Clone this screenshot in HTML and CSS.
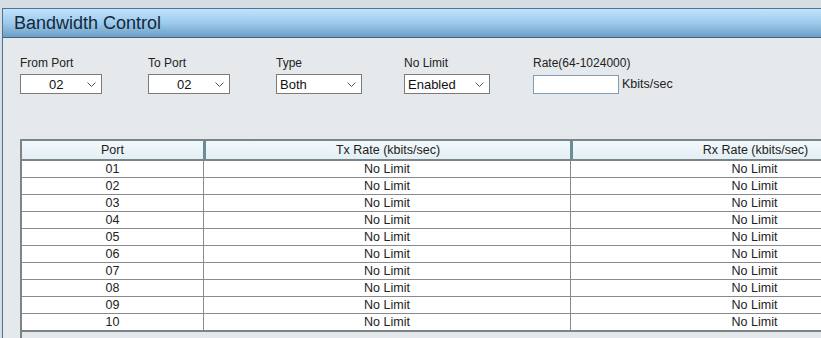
FILE: index.html
```html
<!DOCTYPE html>
<html lang="en">
<head>
  <meta charset="UTF-8">
  <title>Bandwidth Control</title>
  <link rel="stylesheet" href="styles.css">
</head>
<body>

  <div class="panel">
    <div class="panel-header">Bandwidth Control</div>

    <div class="panel-body">
      <!-- form row -->
      <div class="form-row">
        <div class="field">
          <label>From Port</label>
          <div class="select select-port">
            <span>02</span>
            <svg class="chev" width="9" height="5" viewBox="0 0 9 5"><polyline points="0.5,0.5 4.5,4.5 8.5,0.5" fill="none" stroke="#555" stroke-width="1"/></svg>
          </div>
        </div>
        <div class="field">
          <label>To Port</label>
          <div class="select select-port">
            <span>02</span>
            <svg class="chev" width="9" height="5" viewBox="0 0 9 5"><polyline points="0.5,0.5 4.5,4.5 8.5,0.5" fill="none" stroke="#555" stroke-width="1"/></svg>
          </div>
        </div>
        <div class="field">
          <label>Type</label>
          <div class="select select-wide">
            <span>Both</span>
            <svg class="chev" width="9" height="5" viewBox="0 0 9 5"><polyline points="0.5,0.5 4.5,4.5 8.5,0.5" fill="none" stroke="#555" stroke-width="1"/></svg>
          </div>
        </div>
        <div class="field field-last">
          <label>No Limit</label>
          <div class="select select-wide">
            <span>Enabled</span>
            <svg class="chev" width="9" height="5" viewBox="0 0 9 5"><polyline points="0.5,0.5 4.5,4.5 8.5,0.5" fill="none" stroke="#555" stroke-width="1"/></svg>
          </div>
        </div>
        <div class="field">
          <label>Rate(64-1024000)</label>
          <div class="rate">
            <input type="text" class="rate-input">
            <span>Kbits/sec</span>
          </div>
        </div>
      </div>

      <!-- port table -->
      <div class="table-wrap">
        <table class="port-table">
          <thead>
            <tr>
              <th class="col-port">Port</th>
              <th class="col-tx">Tx Rate (kbits/sec)</th>
              <th class="col-rx">Rx Rate (kbits/sec)</th>
            </tr>
          </thead>
          <tbody>
            <tr><td>01</td><td>No Limit</td><td>No Limit</td></tr>
            <tr><td>02</td><td>No Limit</td><td>No Limit</td></tr>
            <tr><td>03</td><td>No Limit</td><td>No Limit</td></tr>
            <tr><td>04</td><td>No Limit</td><td>No Limit</td></tr>
            <tr><td>05</td><td>No Limit</td><td>No Limit</td></tr>
            <tr><td>06</td><td>No Limit</td><td>No Limit</td></tr>
            <tr><td>07</td><td>No Limit</td><td>No Limit</td></tr>
            <tr><td>08</td><td>No Limit</td><td>No Limit</td></tr>
            <tr><td>09</td><td>No Limit</td><td>No Limit</td></tr>
            <tr><td>10</td><td>No Limit</td><td>No Limit</td></tr>
          </tbody>
        </table>
      </div>
    </div>
  </div>

</body>
</html>
```

FILE: styles.css
```css
html, body {
  overflow: hidden;
}

body {
  margin: 0;
  font-family: "Liberation Sans", Arial, sans-serif;
  font-size: 12px;
  background-color: #d6dee4;
  color: #222;
}

.panel {
  margin: 8px 0 0 2px;
  width: 960px;
  border: 1px solid #4e7390;
  background-color: #e5e9ec;
}

.panel-header {
  height: 28px;
  line-height: 28px;
  padding-left: 11px;
  font-size: 18px;
  color: #14283a;
  background: linear-gradient(#c2e3fb, #9ccaec 50%, #6d9ec4);
  border-bottom: 1px solid #3e6383;
}

.panel-body {
  padding: 18px 0 0 17px;
}

/* form row */
.form-row {
  display: flex;
}

.field {
  width: 128px;
  display: flex;
  flex-direction: column;
}

.field-last {
  width: 129px;
}

.field label {
  height: 14px;
  line-height: 14px;
  margin-bottom: 4px;
  color: #222;
}

.select {
  height: 18px;
  border: 1px solid #7a7a7a;
  background-color: #fff;
  display: flex;
  align-items: center;
  position: relative;
  font-size: 13px;
  color: #111;
}

.select-port {
  width: 80px;
}

.select-port span {
  margin-left: 28px;
}

.select-wide {
  width: 84px;
}

.select-wide span {
  margin-left: 3px;
}

.chev {
  position: absolute;
  right: 5px;
  top: 7px;
}

.rate {
  display: flex;
  align-items: center;
  gap: 3px;
}

.rate-input {
  width: 82px;
  height: 17px;
  margin: 1px 0 0;
  padding: 0 1px;
  border: 1px solid #7f9db9;
  background-color: #fff;
}

.rate span {
  font-size: 12.5px;
  color: #222;
}

/* table */
.table-wrap {
  margin-top: 45px;
  height: 220px;
  border-left: 2px solid #7b8587;
  border-top: 2px solid #7b8587;
  background-color: #e4e8ea;
}

.port-table {
  border-collapse: separate;
  border-spacing: 0;
  table-layout: fixed;
  width: 916px;
  border-bottom: 2px solid #7b8587;
  font-size: 12.5px;
}

.port-table th {
  height: 18px;
  padding: 0;
  font-weight: normal;
  color: #222;
  background: linear-gradient(#f2f8fb, #e3eff4);
  border-bottom: 2px solid #7b8587;
}

.port-table th + th {
  border-left: 3px solid #6a8c98;
}

.col-port {
  width: 181px;
}

.col-tx {
  width: 364px;
}

.port-table td {
  height: 16px;
  padding: 0;
  text-align: center;
  background-color: #fff;
  border-bottom: 1px solid #8a8a8a;
  line-height: 16px;
}

.port-table tr:last-child td {
  border-bottom: none;
}

.port-table td + td {
  border-left: 1px solid #8a8a8a;
}
```
